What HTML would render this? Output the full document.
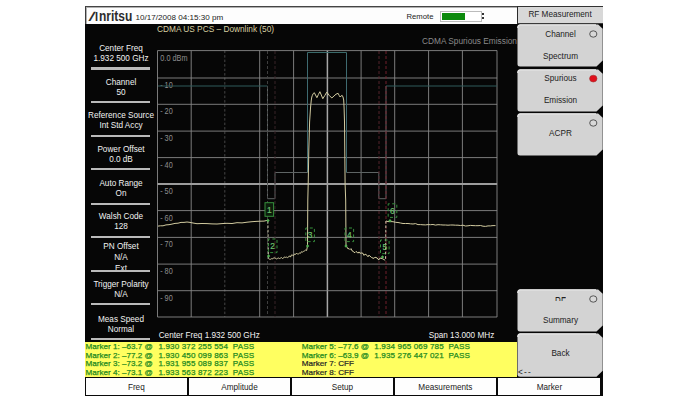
<!DOCTYPE html>
<html><head><meta charset="utf-8"><title>Anritsu CDMA Spurious Emission</title>
<style>
html,body{margin:0;padding:0;background:#fff;}
body{width:689px;height:402px;position:relative;overflow:hidden;font-family:"Liberation Sans",sans-serif;font-size:8.2px;color:#fff;}
div{position:absolute;box-sizing:border-box;white-space:nowrap;}
#screen{left:85px;top:10px;width:517.6px;height:385.6px;background:#060606;}
#hdr{left:85px;top:6px;width:432px;height:18px;border-left:1px solid #3c3c3c;border-top:1px solid #444;box-shadow:inset 1px 1px 0 #b0b0b0;background:#fdfdfd;color:#222;}
#logo{left:-0.4px;top:1.5px;width:60px;height:16px;font-weight:bold;color:#2c2c2c;}
#logo span{position:absolute;display:block;transform-origin:0 0;white-space:nowrap;}
#logo #lg1{left:1.5px;top:1.1px;font-size:13.6px;line-height:14px;transform-origin:0 11.7px;transform:skewX(-30deg) scaleX(1.0);}
#logo #lg2{left:9.6px;top:1.1px;font-size:13.6px;line-height:14px;transform:scaleX(.8);}
#logo #lg3{left:12.9px;top:-0.4px;font-size:15.2px;line-height:16px;transform:scaleX(.79);}
#date{left:49.6px;top:6.1px;font-size:8.1px;line-height:10px;color:#222;}
#remote{left:320.5px;top:5.3px;font-size:7.7px;line-height:10px;color:#222;}
#batt{left:354px;top:4px;width:41.5px;height:11px;border:1px solid #bbb;background:#fff;}
#batt i{position:absolute;left:1.2px;top:0.7px;width:23px;height:7.5px;background:#0c8a0c;display:block;}
#nub{left:396.3px;top:6.2px;width:1.6px;height:5.4px;background:linear-gradient(#333 0 35%,#fff 35% 65%,#333 65% 100%);}
.lp{left:86px;width:70px;text-align:center;line-height:10.1px;color:#f2f2f2;font-size:8.2px;}
.sep{left:91px;width:59.4px;height:2.2px;background:#bababa;}
#title{left:157px;top:23.8px;color:#d6cea0;font-size:8.3px;line-height:10px;}
#mode{left:422px;top:35.8px;color:#8a8a8a;font-size:8.3px;line-height:10px;}
#cf{left:158.7px;top:330.8px;color:#f2f2f2;line-height:10px;}
#span{left:428.7px;top:330.8px;color:#f2f2f2;line-height:10px;}
#yel{left:85px;top:341.6px;width:432px;height:35.5px;background:#ffff60;color:#1d8a20;font-size:8.1px;line-height:8.45px;-webkit-text-stroke:0.25px #1d8a20;}
#yel div{top:1.6px;}
#yel .n{letter-spacing:0.12px;}
#yel pre{margin:0;font:inherit;}
#bot{left:85px;top:377.2px;width:517.6px;height:18.4px;background:#0a0a0a;}
.bb{top:1.1px;height:16.3px;background:#fefefe;color:#222;text-align:center;line-height:19.3px;font-size:8.2px;}
#rfm{left:516.5px;top:6.4px;width:86.1px;height:17.3px;background:#d8d8d8;border-left:1px solid #2a2a2a;border-top:1px solid #333;border-bottom:0.7px solid #3a3a3a;color:#222;text-align:center;line-height:15px;font-size:8.2px;}
.rb{left:516.9px;width:85.7px;height:43px;color:#222;font-size:8.2px;}
.rb svg{position:absolute;left:0;top:0;}
.rb span{position:absolute;left:0.6px;width:86px;text-align:center;line-height:10px;}
svg text.yl{font-family:"Liberation Sans",sans-serif;font-size:8.5px;fill:#8e8e8e;}
svg text.mk{font-family:"Liberation Sans",sans-serif;font-size:8.4px;fill:#6cc06c;stroke:#6cc06c;stroke-width:0.2px;text-anchor:middle;}
</style></head><body>
<div id="screen"></div>
<div id="hdr">
 <div id="logo"><span id="lg1">I</span><span id="lg2">I</span><span id="lg3">nritsu</span></div>
 <div id="date">10/17/2008 04:15:30 pm</div>
 <div id="remote">Remote</div>
 <div id="batt"><i></i></div><div id="nub"></div>
</div>

<div class="lp" style="top:43.6px;line-height:10.4px">Center Freq<br>1.932 500 GHz</div>
<div class="sep" style="top:67.4px"></div>
<div class="lp" style="top:78.0px">Channel<br>50</div>
<div class="sep" style="top:100.9px"></div>
<div class="lp" style="top:111.0px">Reference Source<br>Int Std Accy</div>
<div class="sep" style="top:134.5px"></div>
<div class="lp" style="top:145.0px">Power Offset<br>0.0 dB</div>
<div class="sep" style="top:168.1px"></div>
<div class="lp" style="top:179.0px">Auto Range<br>On</div>
<div class="sep" style="top:202.6px"></div>
<div class="lp" style="top:212.0px">Walsh Code<br>128</div>
<div class="sep" style="top:236px"></div>
<div class="lp" style="top:240.5px;line-height:11px">PN Offset<br>N/A<br>Ext</div>
<div class="sep" style="top:270px"></div>
<div class="lp" style="top:279.5px">Trigger Polarity<br>N/A</div>
<div class="sep" style="top:303.2px"></div>
<div class="lp" style="top:315.2px">Meas Speed<br>Normal</div>
<div class="sep" style="top:337.8px"></div>

<div id="title">CDMA US PCS &#8211; Downlink (50)</div>
<div id="mode">CDMA Spurious Emission</div>

<svg width="689" height="402" viewBox="0 0 689 402" style="position:absolute;left:0;top:0">
<g shape-rendering="auto">
<line x1="157.5" y1="50.6" x2="157.5" y2="317" stroke="#888" stroke-width="0.9"/>
<line x1="191.2" y1="50.6" x2="191.2" y2="317" stroke="#888" stroke-width="0.9"/>
<line x1="224.8" y1="50.6" x2="224.8" y2="317" stroke="#464646" stroke-width="1" stroke-dasharray="2.5 2"/>
<line x1="259.7" y1="50.6" x2="259.7" y2="317" stroke="#888" stroke-width="0.9"/>
<line x1="293.6" y1="50.6" x2="293.6" y2="317" stroke="#888" stroke-width="0.9"/>
<line x1="327.4" y1="50.6" x2="327.4" y2="317" stroke="#a6a6a6" stroke-width="1.5"/>
<line x1="361.1" y1="50.6" x2="361.1" y2="317" stroke="#888" stroke-width="0.9"/>
<line x1="394.7" y1="50.6" x2="394.7" y2="317" stroke="#888" stroke-width="0.9"/>
<line x1="428.6" y1="50.6" x2="428.6" y2="317" stroke="#888" stroke-width="0.9"/>
<line x1="462.4" y1="50.6" x2="462.4" y2="317" stroke="#888" stroke-width="0.9"/>
<line x1="497.0" y1="50.6" x2="497.0" y2="317" stroke="#888" stroke-width="0.9"/>
<line x1="157.5" y1="50.6" x2="497.1" y2="50.6" stroke="#888" stroke-width="0.9"/>
<line x1="157.5" y1="78.0" x2="497.1" y2="78.0" stroke="#888" stroke-width="0.9"/>
<line x1="157.5" y1="104.3" x2="497.1" y2="104.3" stroke="#888" stroke-width="0.9"/>
<line x1="157.5" y1="131.1" x2="497.1" y2="131.1" stroke="#888" stroke-width="0.9"/>
<line x1="157.5" y1="157.6" x2="497.1" y2="157.6" stroke="#888" stroke-width="0.9"/>
<line x1="157.5" y1="184.0" x2="497.1" y2="184.0" stroke="#9c9c9c" stroke-width="1.8"/>
<line x1="157.5" y1="210.6" x2="497.1" y2="210.6" stroke="#888" stroke-width="0.9"/>
<line x1="157.5" y1="237.4" x2="497.1" y2="237.4" stroke="#888" stroke-width="0.9"/>
<line x1="157.5" y1="264.1" x2="497.1" y2="264.1" stroke="#888" stroke-width="0.9"/>
<line x1="157.5" y1="290.7" x2="497.1" y2="290.7" stroke="#888" stroke-width="0.9"/>
<line x1="157.5" y1="317.0" x2="497.1" y2="317.0" stroke="#888" stroke-width="0.9"/>
</g>
<text transform="translate(160.3 60.9) scale(.86 1)" class="yl">0.0 dBm</text>
<text transform="translate(160.3 87.5) scale(.86 1)" class="yl">-<tspan dx="2.2">10</tspan></text>
<text transform="translate(160.3 114.2) scale(.86 1)" class="yl">-<tspan dx="2.2">20</tspan></text>
<text transform="translate(160.3 140.8) scale(.86 1)" class="yl">-<tspan dx="2.2">30</tspan></text>
<text transform="translate(160.3 167.5) scale(.86 1)" class="yl">-<tspan dx="2.2">40</tspan></text>
<text transform="translate(160.3 194.1) scale(.86 1)" class="yl">-<tspan dx="2.2">50</tspan></text>
<text transform="translate(160.3 220.7) scale(.86 1)" class="yl">-<tspan dx="2.2">60</tspan></text>
<text transform="translate(160.3 247.4) scale(.86 1)" class="yl">-<tspan dx="2.2">70</tspan></text>
<text transform="translate(160.3 274.0) scale(.86 1)" class="yl">-<tspan dx="2.2">80</tspan></text>
<text transform="translate(160.3 300.7) scale(.86 1)" class="yl">-<tspan dx="2.2">90</tspan></text>
<!-- limit mask -->
<g fill="none" stroke-width="1">
<path d="M158 86 H267.5 M386 86 H497" stroke="#2f5a5a"/>
<path d="M307.5 52.5 H346.5" stroke="#3a6a6a"/>
<path d="M267.5 86 V198.7 H275 V172.5 H307.5 M346.5 172.5 H378.8 V198.7 H386 V86" stroke="#5e6464"/>
<path d="M307.5 172.5 V52.5 M346.5 52.5 V172.5" stroke="#3e6a70"/>
</g>
<!-- dashed verticals -->
<g fill="none" stroke-width="0.9" stroke-dasharray="3 2">
<path d="M267.5 51 V317" stroke="#454545"/>
<path d="M275 51 V317" stroke="#3c272b"/>
<path d="M379 51 V317" stroke="#5c2730"/>
<path d="M386 51 V317" stroke="#7c2230"/>
</g>
<g fill="none" stroke="#d2cba0" stroke-width="1" stroke-linejoin="round">
<polyline points="158,226.1 160.5,225.8 163,225.8 166,224.9 169,224.7 172,224.1 175,223.4 178,223.2 181,222.4 184,222.4 187,222.0 190,222.4 193,223.0 197,223.7 202,223.5 207,223.6 212,223.9 217,224.0 222,223.6 227,223.3 232,223.5 237,222.7 242,222.9 247,222.2 252,221.7 256,221.4 260,221.2 264,221.1 267.6,220.3"/>
<polyline points="268.5,258.6 269.5,259.2 270.5,259.3 271.5,258.7 272.5,259.0 273.5,257.9 274.5,257.9 275.5,258.1 276.5,259.1 277.5,258.4 278.5,258.0 279.5,258.5 280.5,258.1 281.5,257.6 282.5,258.5 283.5,258.1 284.5,256.9 285.5,257.4 286.5,257.1 287.5,257.6 288.5,257.1 289.5,255.8 290.5,257.1 291.5,254.9 292.5,255.2 293.5,255.7 294.5,254.0 295.5,254.4 296.5,253.1 297.5,254.1 298.5,253.9 299.5,253.1 300.5,253.3 301.5,251.7 302.5,252.1 303.5,251.4 304.5,250.9 305.5,250.1 306.6,250.5 307.5,246 307.8,200 308.2,184 308.8,150 309.6,122 310.5,108 311.3,100 311.8,97 312.4,95.3 313.3,93.5 314.3,92.7 315.5,95 316.9,97.7 318.4,94.5 319.9,91.7 321.3,95 322.8,98.7 324.8,95.5 326.8,92.1 329.3,95.5 331.8,98 334,96 336,94.2 338.1,93.3 339.2,95.5 340.1,97 341.1,96 342.1,95.3 343,97 343.7,100 344.1,108 344.5,122 345.1,184 345.7,200 346,246 347,247.1 348.0,248.9 349.0,248.5 350.0,249.6 351.0,248.6 352.0,250.8 353.0,251.1 354.0,252.5 355.0,252.5 356.0,251.5 357.0,252.1 358.0,253.2 359.0,251.9 360.0,253.4 361.0,252.9 362.0,253.1 363.0,253.3 364.0,255.4 365.0,254.1 366.0,254.6 367.0,255.3 368.0,256.8 369.0,255.1 370.0,256.3 371.0,256.8 372.0,257.9 373.0,258.0 374.0,258.4 375.0,257.1 376.0,257.7 377.0,257.8 378.0,259.4 379.0,259.8 380.0,258.0 381.0,258.3 382.0,258.6 383.0,258.9 384.0,259.7 385.2,260.2"/>
<polyline points="386,221 388,221.6 390.5,221.6 393.0,221.7 395.5,222.3 398.0,222.5 400.5,223.0 403.0,223.5 405.5,223.5 408.0,223.5 410.5,223.8 413.0,224.0 415.5,223.6 418.0,224.6 420.5,224.6 423.0,224.8 425.5,224.9 428.0,224.6 430.5,224.7 433.0,224.5 435.5,225.1 438.0,224.7 440.5,224.8 443.0,225.0 445.5,225.0 448.0,225.2 450.5,225.0 453.0,225.0 455.5,225.2 458.0,225.2 460.5,225.5 463.0,225.2 465.5,226.0 468.0,225.8 470.5,225.4 473.0,225.6 475.5,225.7 478.0,225.7 480.5,225.5 483.0,226.2 485.5,226.4 488.0,225.9 490.5,225.9 493.0,225.6 495.5,225.6"/>
<path d="M267.9 221 L268.4 258.6 M385.9 221 L385.5 260" stroke="#c8c4a8" stroke-dasharray="2.6 1.8"/>
</g>
<rect x="265" y="202.7" width="8.6" height="13.6" fill="#0c1c0c" stroke="#36903c" stroke-width="1"/><text x="269.25" y="212.89999999999998" class="mk">1</text><path d="M266.3 220.5 L268 218.8 L269.7 220.5 L268 222.2 Z" fill="#52b052"/>
<rect x="268.4" y="239" width="8.6" height="13.6" fill="none" stroke="#36903c" stroke-width="1" stroke-dasharray="3 2.5" stroke-dashoffset="1.5"/><text x="272.65" y="249.2" class="mk">2</text><path d="M266.90000000000003 256 L268.6 254.3 L270.3 256 L268.6 257.7 Z" fill="#52b052"/>
<rect x="305.8" y="228" width="8.6" height="13.6" fill="none" stroke="#36903c" stroke-width="1" stroke-dasharray="3 2.5" stroke-dashoffset="1.5"/><text x="310.05" y="238.2" class="mk">3</text><path d="M305.90000000000003 246 L307.6 244.3 L309.3 246 L307.6 247.7 Z" fill="#52b052"/>
<rect x="345" y="228" width="8.6" height="13.6" fill="none" stroke="#36903c" stroke-width="1" stroke-dasharray="3 2.5" stroke-dashoffset="1.5"/><text x="349.25" y="238.2" class="mk">4</text><path d="M344.3 246 L346 244.3 L347.7 246 L346 247.7 Z" fill="#52b052"/>
<rect x="380.5" y="240" width="8.6" height="13.6" fill="none" stroke="#36903c" stroke-width="1" stroke-dasharray="3 2.5" stroke-dashoffset="1.5"/><text x="384.75" y="250.2" class="mk">5</text><path d="M380.8 257 L382.5 255.3 L384.2 257 L382.5 258.7 Z" fill="#52b052"/>
<rect x="388.2" y="203.8" width="8.6" height="13.6" fill="none" stroke="#36903c" stroke-width="1" stroke-dasharray="3 2.5" stroke-dashoffset="1.5"/><text x="392.45" y="214.0" class="mk">6</text><path d="M388.3 220.8 L390 219.10000000000002 L391.7 220.8 L390 222.5 Z" fill="#52b052"/>
</svg>

<div id="cf">Center Freq 1.932 500 GHz</div>
<div id="span">Span 13.000 MHz</div>

<div id="yel">
<div style="left:0.5px"><pre>Marker 1: &#8211;63.7 @
Marker 2: &#8211;77.2 @
Marker 3: &#8211;73.2 @
Marker 4: &#8211;73.1 @</pre></div>
<div class="n" style="left:73.5px"><pre>1.930 372 255 554  PASS
1.930 450 099 863  PASS
1.931 955 089 837  PASS
1.933 563 872 223  PASS</pre></div>
<div style="left:216.8px"><pre>Marker 5: &#8211;77.6 @
Marker 6: &#8211;63.9 @
<span style="color:#222;-webkit-text-stroke:0.2px #222">Marker 7: CFF</span>
<span style="color:#222;-webkit-text-stroke:0.2px #222">Marker 8: CFF</span></pre></div>
<div class="n" style="left:289.3px"><pre>1.934 965 069 785  PASS
1.935 276 447 021  PASS</pre></div>
</div>

<div id="bot">
<div class="bb" style="left:1px;width:100.6px">Freq</div>
<div class="bb" style="left:104px;width:101px">Amplitude</div>
<div class="bb" style="left:207.3px;width:100.3px">Setup</div>
<div class="bb" style="left:310px;width:100.8px">Measurements</div>
<div class="bb" style="left:413.3px;width:102.2px">Marker</div>
</div>

<div id="rfm">RF Measurement</div>
<div class="rb" style="top:24px;height:43px"><svg width="85.7" height="43" viewBox="0 0 85.7 43"><path d="M3 0.5 H81.2 L85.7 4.8 V36.5 L79.5 42.5 H3 Q0.5 42.5 0.5 40 V3 Q0.5 0.5 3 0.5 Z" fill="#d3d3d3"/><path d="M0.8 4 V3 Q0.8 0.8 3 0.8 H79" fill="none" stroke="#f4f4f4" stroke-width="1"/><ellipse cx="76.3" cy="10" rx="3.6" ry="3.2" fill="#d8d8d8" stroke="#484848" stroke-width="0.9"/></svg><span style="top:5.6px">Channel</span><span style="top:27.5px">Spectrum</span></div>
<div class="rb" style="top:69px;height:43px"><svg width="85.7" height="43" viewBox="0 0 85.7 43"><path d="M3 0.5 H81.2 L85.7 4.8 V36.5 L79.5 42.5 H3 Q0.5 42.5 0.5 40 V3 Q0.5 0.5 3 0.5 Z" fill="#d3d3d3"/><path d="M0.8 4 V3 Q0.8 0.8 3 0.8 H79" fill="none" stroke="#f4f4f4" stroke-width="1"/><ellipse cx="76.3" cy="9.6" rx="3.7" ry="3.4" fill="#e0101c" stroke="#a03030" stroke-width="0.6"/></svg><span style="top:4.5px">Spurious</span><span style="top:26.5px">Emission</span></div>
<div class="rb" style="top:113px;height:43px"><svg width="85.7" height="43" viewBox="0 0 85.7 43"><path d="M3 0.5 H81.2 L85.7 4.8 V36.5 L79.5 42.5 H3 Q0.5 42.5 0.5 40 V3 Q0.5 0.5 3 0.5 Z" fill="#d3d3d3"/><path d="M0.8 4 V3 Q0.8 0.8 3 0.8 H79" fill="none" stroke="#f4f4f4" stroke-width="1"/><ellipse cx="76.3" cy="10" rx="3.6" ry="3.2" fill="#d8d8d8" stroke="#484848" stroke-width="0.9"/></svg><span style="top:15.5px">ACPR</span></div>
<div class="rb" style="top:289.3px;height:43px"><svg width="85.7" height="43" viewBox="0 0 85.7 43"><path d="M3 0.5 H81.2 L85.7 4.8 V36.5 L79.5 42.5 H3 Q0.5 42.5 0.5 40 V3 Q0.5 0.5 3 0.5 Z" fill="#d3d3d3"/><path d="M0.8 4 V3 Q0.8 0.8 3 0.8 H79" fill="none" stroke="#f4f4f4" stroke-width="1"/><ellipse cx="76.3" cy="10" rx="3.6" ry="3.2" fill="#d8d8d8" stroke="#484848" stroke-width="0.9"/></svg><span style="top:6.4px;height:5.1px;overflow:hidden"><b style="display:inline-block;font-weight:normal;line-height:10px;transform:scaleY(1.7);transform-origin:50% 2px">RF</b></span><span style="top:26.5px">Summary</span></div>
<div class="rb" style="top:332.8px;height:44.2px"><svg width="85.7" height="44.2" viewBox="0 0 85.7 44.2"><path d="M3 0.5 H81.2 L85.7 4.8 V37.7 L79.5 43.7 H3 Q0.5 43.7 0.5 41.2 V3 Q0.5 0.5 3 0.5 Z" fill="#d3d3d3"/><path d="M0.8 4 V3 Q0.8 0.8 3 0.8 H79" fill="none" stroke="#f4f4f4" stroke-width="1"/></svg><span style="top:16.2px">Back</span><span style="top:35.2px;left:1px;width:auto;letter-spacing:1.3px">&lt;--</span></div>
</body></html>
